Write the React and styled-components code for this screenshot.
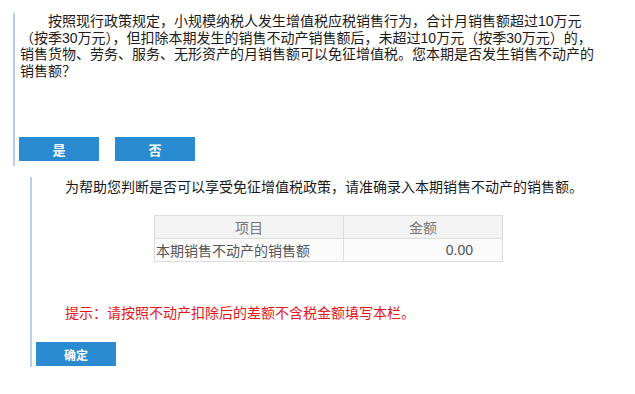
import styled, { createGlobalStyle } from 'styled-components';

const Global = createGlobalStyle`
  body {
    margin: 0;
    background: #fff;
    font-family: "Liberation Sans", "Noto Sans CJK SC", sans-serif;
    color: #1a1a1a;
  }
`

const Page = styled.div`
  padding: 8px 0 0 13px;
`

const Section = styled.div`
  border-left: 2px solid #bccfea;
  padding: ${p => p.pad};
  margin: ${p => p.margin || '0'};
`

const Question = styled.p`
  margin: 5px 0 0 1px;
  font-size: 14px;
  line-height: 16.5px;
  white-space: nowrap;
`

const Indent = styled.span`
  display: inline-block;
  width: ${p => p.w};
`

const ButtonRow = styled.div`
  display: flex;
  gap: 16px;
  margin-top: 58px;
`

const Button = styled.button`
  width: 80px;
  height: 24px;
  border: none;
  padding: 0;
  background: #2b8bd0;
  color: #fff;
  font-family: "Liberation Sans", "Noto Sans CJK SC", sans-serif;
  font-size: ${p => p.size || '13px'};
  font-weight: bold;
  cursor: pointer;
`

const Intro = styled.p`
  margin: 0 0 0 29px;
  font-size: 14px;
  line-height: 17px;
  white-space: nowrap;
`

const Table = styled.table`
  margin: 19px 0 0 118px;
  width: 349px;
  border-collapse: collapse;
  font-size: 14px;
  color: #555;
`

const Th = styled.th`
  height: 22px;
  padding: 0;
  border: 1px solid #dcdcdc;
  background: #f3f3f3;
  font-weight: normal;
  color: #777;
  text-align: center;
`

const Td = styled.td`
  height: 22px;
  padding: ${p => p.right ? '0 29px 0 0' : '0 0 0 1px'};
  border: 1px solid #dcdcdc;
  background: #fafafa;
  text-align: ${p => p.right ? 'right' : 'left'};
`

const Hint = styled.p`
  margin: 43px 0 0 29px;
  font-size: 14px;
  line-height: 17px;
  color: #e4161b;
  white-space: nowrap;
`

const Footer = styled.div`
  margin-top: 20px;
`

export default function App() {
  return (
    <Page>
      <Global />
      <Section pad="0 0 5px 4px">
        <Question>
          <Indent w="28px" />按照现行政策规定，小规模纳税人发生增值税应税销售行为，合计月销售额超过10万元<br />
          （按季30万元），但扣除本期发生的销售不动产销售额后，未超过10万元（按季30万元）的，<br />
          销售货物、劳务、服务、无形资产的月销售额可以免征增值税。您本期是否发生销售不动产的<br />
          销售额？
        </Question>
        <ButtonRow>
          <Button>是</Button>
          <Button>否</Button>
        </ButtonRow>
      </Section>
      <Section pad="2px 0 1px 4px" margin="11px 0 0 17px">
        <Intro>为帮助您判断是否可以享受免征增值税政策，请准确录入本期销售不动产的销售额。</Intro>
        <Table>
          <thead>
            <tr>
              <Th style={{ width: '188px' }}>项目</Th>
              <Th>金额</Th>
            </tr>
          </thead>
          <tbody>
            <tr>
              <Td>本期销售不动产的销售额</Td>
              <Td right>0.00</Td>
            </tr>
          </tbody>
        </Table>
        <Hint>提示：请按照不动产扣除后的差额不含税金额填写本栏。</Hint>
        <Footer>
          <Button size="12px">确定</Button>
        </Footer>
      </Section>
    </Page>
  )
}
